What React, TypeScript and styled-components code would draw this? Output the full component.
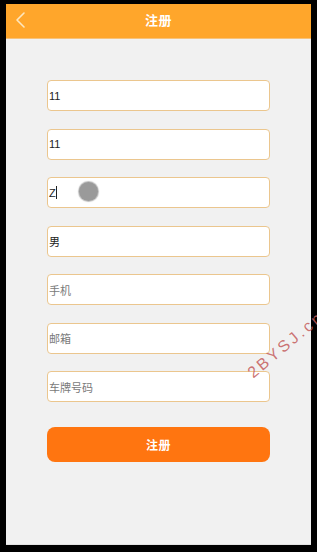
import styled, { createGlobalStyle } from "styled-components";

const GlobalStyle = createGlobalStyle`
  html, body {
    margin: 0;
    padding: 0;
    background: #000;
  }
  body {
    font-family: "Liberation Sans", "Noto Sans CJK SC", sans-serif;
  }
`;

const Frame = styled.div`
  position: relative;
  width: 317px;
  height: 552px;
  box-sizing: border-box;
  padding: 4px 6px 7px 6px;
  background: #000;
  overflow: hidden;
`;

const Screen = styled.div`
  height: 100%;
  display: flex;
  flex-direction: column;
  background: #f1f1f1;
  border-bottom: 1px solid #e2e2e2;
  box-sizing: border-box;
`;

const Header = styled.div`
  height: 34px;
  flex-shrink: 0;
  position: relative;
  display: flex;
  align-items: center;
  justify-content: center;
  background: #ffa62b;
  border-bottom: 1px solid #f7c27a;
`;

const Back = styled.div`
  position: absolute;
  left: 9px;
  top: 7px;
  width: 14px;
  height: 18px;
  display: flex;
`;

const Title = styled.div`
  color: #fff;
  font-size: 13px;
  font-weight: bold;
  letter-spacing: 0.5px;
  margin-top: -3px;
`;

const Form = styled.div`
  display: flex;
  flex-direction: column;
  gap: 17.5px;
  padding: 41px 41px 0 41px;
`;

const Field = styled.div<{ $placeholder?: boolean }>`
  height: 31px;
  box-sizing: border-box;
  display: flex;
  align-items: center;
  padding: 0 1px;
  background: #fff;
  border: 1px solid #ebc68e;
  border-radius: 4px;
  font-size: 11px;
  color: ${(p) => (p.$placeholder ? "#7a7a7a" : "#222")};
`;

const Caret = styled.span`
  display: inline-block;
  width: 1px;
  height: 13px;
  background: #222;
`;

const Touch = styled.div`
  position: absolute;
  left: 79px;
  top: 182px;
  width: 19px;
  height: 19px;
  border-radius: 50%;
  background: #9a9a9a;
  box-shadow: 0 0 1px 1px #bdbdbd;
`;

const Submit = styled.button`
  margin: 7px 0 0 0;
  height: 35px;
  border: none;
  border-radius: 8px;
  background: #ff7510;
  color: #fff;
  font-family: inherit;
  font-size: 12px;
  font-weight: bold;
  letter-spacing: 0.5px;
`;

const Watermark = styled.div`
  position: absolute;
  left: 250px;
  top: 366px;
  transform: rotate(-40deg);
  transform-origin: left center;
  font-size: 16px;
  letter-spacing: 3px;
  color: rgba(196, 92, 92, 0.85);
  white-space: nowrap;
  pointer-events: none;
`;

const fields = [
  { text: "11" },
  { text: "11" },
  { text: "Z", caret: true },
  { text: "男" },
  { text: "手机", placeholder: true },
  { text: "邮箱", placeholder: true },
  { text: "车牌号码", placeholder: true },
];

export default function App() {
  return (
    <>
      <GlobalStyle />
      <Frame>
        <Screen>
          <Header>
            <Back>
              <svg width="14" height="18" viewBox="0 0 14 18">
                <path d="M9 2 L2 9 L9 16" fill="none" stroke="#fde7bf" strokeWidth="1.6" strokeLinecap="round" strokeLinejoin="round" />
              </svg>
            </Back>
            <Title>注册</Title>
          </Header>
          <Form>
            {fields.map((f, i) => (
              <Field key={i} $placeholder={f.placeholder}>
                {f.text}
                {f.caret && <Caret />}
              </Field>
            ))}
            <Submit>注册</Submit>
          </Form>
        </Screen>
        <Touch />
        <Watermark>2BYSJ.cn</Watermark>
      </Frame>
    </>
  );
}
